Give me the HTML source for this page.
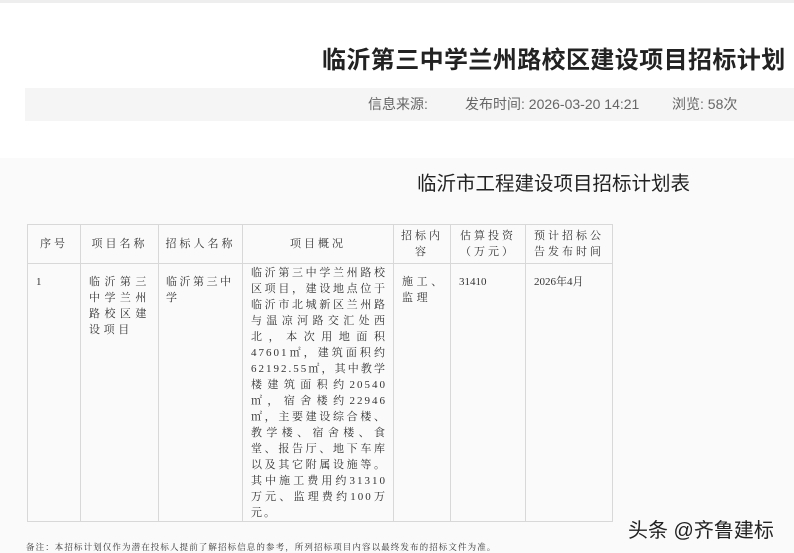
<!DOCTYPE html>
<html><head><meta charset="utf-8"><style>
*{margin:0;padding:0;box-sizing:border-box}
body{width:794px;height:553px;overflow:hidden;background:#fff;font-family:"Liberation Sans","Noto Sans CJK SC",sans-serif;color:#333;position:relative}
.a{position:absolute;white-space:nowrap}
.topline{position:absolute;left:0;top:0;width:794px;height:3px;background:#eee}
.meta{position:absolute;left:25px;top:88px;width:769px;height:33px;background:#f5f5f5}
.low{position:absolute;left:0;top:158px;width:794px;height:395px;background:#fafafa}
table{position:absolute;left:27px;top:224px;border-collapse:collapse;font-family:"Liberation Serif","Noto Serif CJK SC",serif;font-size:11px;color:#333;background:#fafafa}
td{border:1px solid #d8d8d8;vertical-align:top;padding:0 0 0 0;line-height:16px}
.h td{height:39px;vertical-align:middle;text-align:center;letter-spacing:3px;line-height:16px}
.j{letter-spacing:3.6px}
.ln{display:block;text-align:justify;text-align-last:justify}
</style></head><body>
<div class="topline"></div>
<div class="a" style="left:322px;top:40px;font-size:24px;font-weight:bold;color:#222;letter-spacing:0.4px">临沂第三中学兰州路校区建设项目招标计划</div>
<div class="meta"></div>
<div class="a" style="left:368px;top:94px;font-size:14px;color:#666">信息来源:</div>
<div class="a" style="left:465px;top:94px;font-size:14px;color:#666">发布时间: 2026-03-20 14:21</div>
<div class="a" style="left:672px;top:94px;font-size:14px;color:#666">浏览: 58次</div>
<div class="low"></div>
<div class="a" style="left:417px;top:167px;font-size:19.5px;color:#222">临沂市工程建设项目招标计划表</div>
<table>
<colgroup><col style="width:53px"><col style="width:78px"><col style="width:84px"><col style="width:151px"><col style="width:57px"><col style="width:75px"><col style="width:87px"></colgroup>
<tr class="h"><td>序号</td><td>项目名称</td><td>招标人名称</td><td>项目概况</td><td>招标内<br>容</td><td>估算投资<br>（万元）</td><td>预计招标公<br>告发布时间</td></tr>
<tr style="height:256px"><td style="padding:10px 0 0 8px">1</td>
<td style="padding:10px 8px 0 8px" class="j"><span class="ln">临沂第三</span><span class="ln">中学兰州</span><span class="ln">路校区建</span>设项目</td>
<td style="padding:10px 4px 0 7px;letter-spacing:2.5px"><span style="white-space:nowrap">临沂第三中</span><br>学</td>
<td style="padding:1px 6px 0 8px;letter-spacing:2px"><span class="ln">临沂第三中学兰州路校</span><span class="ln">区项目，建设地点位于</span><span class="ln">临沂市北城新区兰州路</span><span class="ln">与温凉河路交汇处西</span><span class="ln">北，本次用地面积</span><span class="ln">47601㎡，建筑面积约</span><span class="ln">62192.55㎡，其中教学</span><span class="ln">楼建筑面积约20540</span><span class="ln">㎡，宿舍楼约22946</span><span class="ln">㎡，主要建设综合楼、</span><span class="ln">教学楼、宿舍楼、食</span><span class="ln">堂、报告厅、地下车库</span><span class="ln">以及其它附属设施等。</span><span class="ln">其中施工费用约31310</span><span class="ln">万元、监理费约100万</span>元。</td>
<td style="padding:10px 0 0 8px" class="j">施工、<br>监理</td>
<td style="padding:10px 0 0 8px">31410</td>
<td style="padding:10px 0 0 8px">2026年4月</td></tr>
</table>
<div class="a" style="left:628px;top:514px;font-size:20px;color:#222">头条 @齐鲁建标</div>
<div class="a" style="left:26px;top:541px;font-size:8.5px;color:#333;font-family:'Liberation Serif','Noto Serif CJK SC',serif;letter-spacing:1.1px">备注：本招标计划仅作为潜在投标人提前了解招标信息的参考，所列招标项目内容以最终发布的招标文件为准。</div>
</body></html>
